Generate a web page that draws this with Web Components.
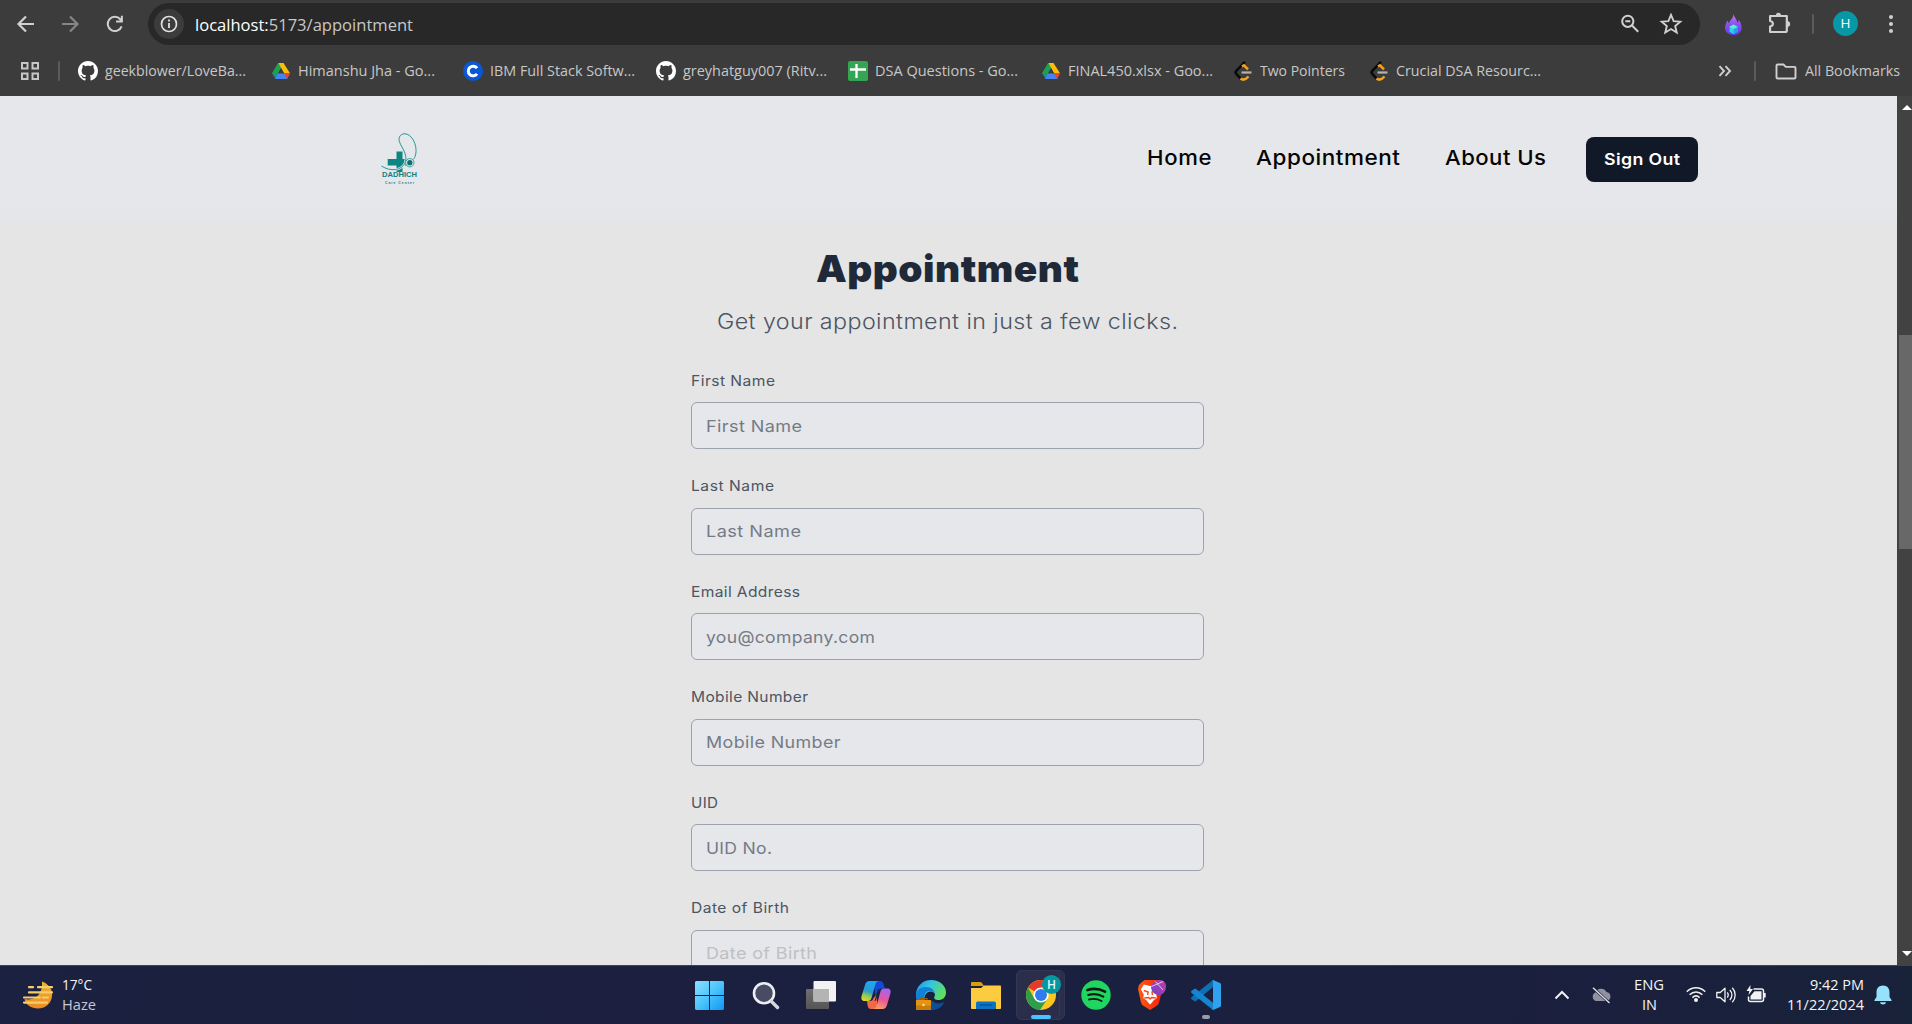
<!DOCTYPE html>
<html lang="en">
<head>
<meta charset="utf-8">
<title>Appointment</title>
<style>
html,body{margin:0;height:100%;overflow:hidden;background:#e5e5e5}
body{font-family:"Open Sans","Noto Sans",sans-serif}
</style>
</head>
<body>
<desktop-screen></desktop-screen>
<script>
const ICONS = {
back:['0 0 24 24','<path d="M20 12H5M12 4.5 4.5 12l7.5 7.5" fill="none" stroke="#d0d0d0" stroke-width="2.2"/>'],
fwd:['0 0 24 24','<path d="M4 12h15M12 4.5l7.5 7.5-7.5 7.5" fill="none" stroke="#858585" stroke-width="2.2"/>'],
reload:['0 0 24 24','<path d="M19.2 14.5A7.8 7.8 0 1 1 17.8 6.8L19 8.2M19.5 3v6.3h-6.3" fill="none" stroke="#d0d0d0" stroke-width="2.2"/>'],
info:['0 0 30 30','<circle cx="15" cy="15" r="15" fill="#3c3c3c"/><circle cx="15" cy="15" r="7.5" fill="none" stroke="#e0e0e0" stroke-width="1.7"/><path d="M15 14v5M15 10.6v2" stroke="#e0e0e0" stroke-width="1.8"/>'],
zoomout:['0 0 20 20','<circle cx="7.8" cy="7.3" r="5.6" fill="none" stroke="#d0d0d0" stroke-width="2"/><path d="M12 11.5l6.2 6.2M5.3 7.3h5" stroke="#d0d0d0" stroke-width="2" fill="none"/>'],
star:['0 0 20 20','<path d="M10 1.8l2.4 5.6 6 .5-4.6 3.9 1.4 5.9-5.2-3.1-5.2 3.1 1.4-5.9L1.6 7.9l6-.5z" fill="none" stroke="#d0d0d0" stroke-width="1.7"/>'],
flame:['0 0 17 21','<defs><linearGradient id="f" x1="0" y1="0" x2="0" y2="1"><stop offset="0" stop-color="#c77af0"/><stop offset=".5" stop-color="#8a4ff0"/><stop offset="1" stop-color="#5a3df0"/></linearGradient></defs><path d="M8.500 0c.5 3 3.500 5.500 4 9l1.500-3c2 3 3 6 2.500 9-.8 4-4 6-8 6-5 0-8.500-3-8.500-7 0-3.500 1.500-5.500 2.500-7.500l1.500 3C4.500 6 8.500 5 8.500 0z" fill="url(#f)"/><path d="M8.500 10.500l4 2.200v5l-4 2.600-4-2.600v-5z" fill="#2fd0e8"/><path d="M8.500 15l4-2.300v5l-4 2.600z" fill="#2a9df0"/><path d="M4.500 12.700l4-2.200 4 2.200-4 2.300z" fill="#5af0c8"/>'],
puzzle:['0 0 22 22','<path d="M2 4h16v14.500c0 .8-.5 1.500-1.500 1.500H2v-5.500c3.500-.5 3.500-5 0-5.500z" fill="none" stroke="#d0d0d0" stroke-width="2.100" stroke-linejoin="round"/><path d="M7.500 4a2.500 3.200 0 0 1 5 0zM18 9a3 2.800 0 0 1 0 6z" fill="#d0d0d0"/>'],
dots:['0 0 6 20','<g fill="#d0d0d0"><circle cx="3" cy="3" r="2"/><circle cx="3" cy="10" r="2"/><circle cx="3" cy="17" r="2"/></g>'],
apps:['0 0 20 20','<g fill="none" stroke="#c7c7c7" stroke-width="2"><path d="M2 2h5.500v5.500H2zM12.500 2H18v5.500h-5.500zM2 12.500h5.500V18H2zM12.500 12.500H18V18h-5.500z"/></g>'],
github:['0 0 16 16','<path fill="#fff" d="M8 0C3.580 0 0 3.580 0 8c0 3.540 2.290 6.530 5.470 7.590.4.070.55-.17.55-.38 0-.19-.01-.82-.01-1.490-2.010.37-2.530-.49-2.690-.94-.09-.23-.48-.94-.82-1.130-.28-.15-.68-.52-.01-.53.63-.01 1.080.58 1.230.82.72 1.210 1.870.87 2.330.66.070-.52.28-.87.51-1.070-1.780-.2-3.640-.89-3.640-3.950 0-.87.31-1.590.82-2.150-.08-.2-.36-1.020.08-2.120 0 0 .67-.21 2.200.82.64-.18 1.320-.27 2-.27s1.360.09 2 .27c1.530-1.040 2.200-.82 2.200-.82.44 1.100.16 1.920.08 2.120.51.56.82 1.270.82 2.150 0 3.070-1.870 3.750-3.650 3.950.29.25.54.73.54 1.480 0 1.070-.01 1.930-.01 2.200 0 .21.15.46.55.38A8.010 8.010 0 0 0 16 8c0-4.420-3.580-8-8-8z"/>'],
drive:['0 0 18 16','<path fill="#1ea052" d="M6 0h6L4 14.500 3.500 15.500 0 10.200z"/><path fill="#fcbd05" d="M6.500 0h5L18 10.300h-6z"/><path fill="#4284f3" d="M5.500 10.300H18l-3 5.700H3z"/><path fill="#1a6ee0" d="M5.900 10.300L3 16l-3-5.700z" opacity=".25"/><path fill="#ea4435" d="M12 10.300h6l-3 5.700z"/><path fill="#3c3c3c" d="M9 5.200l3 5.100H6z"/>'],
cour:['0 0 20 20','<circle cx="10" cy="10" r="10" fill="#0a57d6"/><path d="M14 7.200A4.800 4.800 0 1 0 14 12.800" fill="none" stroke="#fff" stroke-width="3"/>'],
sheet:['0 0 20 20','<rect width="20" height="20" rx="2" fill="#34a653"/><path d="M8.500 3v14M2 8.500h16" stroke="#fff" stroke-width="2.300"/>'],
leet:['0 0 18 20','<path d="M11 .8 2.300 9.800c-1 1-1 2 0 3l4.500 5" fill="none" stroke="#0a0a0a" stroke-width="2.500"/><path d="M8 5.500l2-1.200 4 4M6.500 17.500c2.500 2 5 1.500 8-2" fill="none" stroke="#f5a11d" stroke-width="2.500"/><path d="M7.500 11.500h10" stroke="#b3b3b3" stroke-width="2.200"/>'],
more:['0 0 14 12','<path d="M1.500 1.200 6 6l-4.500 4.800M7.500 1.200 12 6l-4.500 4.800" fill="none" stroke="#d0d0d0" stroke-width="1.900"/>'],
folder:['0 0 22 17','<path d="M1.500 2.500c0-.6.400-1 1-1h6l2.300 2.400h8.700c.6 0 1 .4 1 1v9.600c0 .6-.4 1-1 1h-17c-.6 0-1-.4-1-1z" fill="none" stroke="#d0d0d0" stroke-width="1.900"/>'],
logo:['0 0 36 40','<path d="M15.500 18.500h6V26h6v6.500h-6V39h-6v-6.500H6.700V26h8.800z" fill="#0c8583"/><path d="M.5 33c9 6 20 4.500 23.500-3 4-9-6-18-6-23.500C18 2.500 21 .6 24 .8c6 .4 10.500 8 11 15.500.3 6-1.500 9.500-4 11" fill="none" stroke="#dfe9ec" stroke-width="2.400"/><path d="M.5 33c9 6 20 4.500 23.500-3 4-9-6-18-6-23.500C18 2.500 21 .6 24 .8c6 .4 10.500 8 11 15.500.3 6-1.500 9.500-4 11" fill="none" stroke="#2f9491" stroke-width="1"/><circle cx="28.800" cy="29.700" r="4.200" fill="#d5e4e6" stroke="#2f9491" stroke-width=".8"/><circle cx="28.800" cy="29.700" r="2.600" fill="#0c6f70"/>'],
win:['0 0 29 29','<defs><linearGradient id="w" x1="0" y1="0" x2="1" y2="1"><stop offset="0" stop-color="#8ce0ff"/><stop offset=".5" stop-color="#4cc4fb"/><stop offset="1" stop-color="#0d97f5"/></linearGradient></defs><path fill="url(#w)" d="M1 0h13v14H0V1zM15 0h13l1 1v13H15zM0 15h14v14H1l-1-1zM15 15h14v13l-1 1H15z"/>'],
search:['0 0 28 29','<circle cx="12" cy="12.200" r="10" fill="#474b63" stroke="#eceef2" stroke-width="2.600"/><path d="M19.500 20.500l6 6" stroke="#d5d8de" stroke-width="3.400" stroke-linecap="round"/>'],
task:['0 0 30 28','<defs><linearGradient id="t" x1="0" y1="0" x2="0" y2="1"><stop offset="0" stop-color="#6f6f6f"/><stop offset="1" stop-color="#555"/></linearGradient></defs><rect y="8" width="23" height="20" rx="1" fill="url(#t)"/><rect x="7.500" width="22.500" height="20.500" rx="1" fill="#f2f2f2"/><path d="M7.500 8H23v12.500H7.500z" fill="#b4b4b4"/>'],
copilot:['0 0 30 28','<defs><linearGradient id="c1" x1=".5" y1="0" x2=".2" y2="1"><stop offset="0" stop-color="#19a8f5"/><stop offset=".5" stop-color="#2b9bd0"/><stop offset=".75" stop-color="#8fcf50"/><stop offset="1" stop-color="#f5d01f"/></linearGradient><linearGradient id="c2" x1=".6" y1="0" x2=".3" y2="1"><stop offset="0" stop-color="#a565ef"/><stop offset=".5" stop-color="#e8559c"/><stop offset="1" stop-color="#fba060"/></linearGradient></defs><path d="M13 0h6c2 0 3 1 3.500 3l1.500 4.500h-3c-2 0-3 1-3.500 3L14 14z" fill="#1548d6"/><path d="M16 28h-6c-2 0-2.800-1-3.300-3L6 20h3c2 0 3-1 3.500-3L16 13z" fill="#f06a48"/><path d="M8.500 0H18c-2 0-3 1.500-3.600 3.500L10.500 17c-.6 2-1.500 3-3.500 3H3.500C.5 20 0 17.500.6 15L4 4C4.800 1.500 6 0 8.500 0z" fill="url(#c1)"/><path d="M21.500 28H12c2 0 3-1.500 3.600-3.500l3.900-14c.6-2 1.500-3 3.500-3h3.500c3 0 3.500 2.500 2.900 5L26 24c-.8 2.500-2 4-4.500 4z" fill="url(#c2)"/><path d="M13.500 20 17 8.500l1.200-.5L15 19.500z" fill="#1c2140"/>'],
edge:['0 0 30 30','<defs><linearGradient id="e1" x1="0" y1="0" x2="1" y2=".5"><stop offset="0" stop-color="#1a8fd8"/><stop offset=".45" stop-color="#35c3e3"/><stop offset="1" stop-color="#5fe05a"/></linearGradient></defs><path d="M7 28C16 33 26 29 28 22c-4 2-9 2-11-1L6 19z" fill="#104f96"/><path d="M0 15C0 6 7 0 15 0c9 0 15 6 15 12.500 0 5-3.500 7.500-7.500 7.500-3.500 0-5-1.500-4-3.500 1.500-2.500-.5-5-4-5-5 0-7 6-6 10H1z" fill="url(#e1)"/><path d="M0 15c1-6 5-8 10-8 5 0 8 3 9 6-3-3-8-3-10 1-1 2-1 5 0 8H1z" fill="#1180d8"/><path d="M0 20h15v10H0z" fill="#c97c08"/><path d="M0 20h15v5.500H0z" fill="#e29412"/><path d="M4 20v-1.500h7V20" fill="none" stroke="#9c5a08" stroke-width="1.200"/><circle cx="7.500" cy="25" r="1.200" fill="#ffe680"/>'],
explorer:['0 0 30 27','<path d="M0 1.200C0 .4.500 0 1.200 0H9c1 0 1.500.5 2 1l2 3H0z" fill="#dc9d0c"/><path d="M0 6h10l3-2.500h16c.6 0 1 .4 1 1V26c0 .6-.4 1-1 1H1c-.6 0-1-.4-1-1z" fill="#fccb3f"/><path d="M5 27v-5.500C5 20 6 19.500 7 19.500h16c1 0 2 .5 2 2V27z" fill="#0b72c4"/><path d="M8.500 23h13" stroke="#064e90" stroke-width="1.300"/>'],
chrome:['0 0 30 30','<circle cx="15" cy="15" r="15" fill="#fcc620"/><path d="M15 15 2 7.500A15 15 0 0 1 28 7.500H15z" fill="#e33b2e"/><path d="M15 15l6.500 3.700L14 30A15 15 0 0 1 2 7.500l6.500 11.200z" fill="#2f9e49"/><circle cx="15" cy="15" r="7.600" fill="#fff"/><circle cx="15" cy="15" r="6" fill="#2e7cf0"/>'],
spotify:['0 0 30 30','<circle cx="15" cy="15" r="14.700" fill="#1fd760"/><g fill="none" stroke="#0b1a12" stroke-linecap="round"><path d="M6.500 10c6-1.800 12-1.200 17.500 1.600" stroke-width="2.700"/><path d="M7.300 15c5-1.400 10.300-.9 15 1.600" stroke-width="2.200"/><path d="M8 19.500c4.500-1 8.800-.6 12.600 1.500" stroke-width="1.800"/></g>'],
brave:['0 0 29 30','<defs><linearGradient id="b" x1="0" y1="0" x2="1" y2="0"><stop offset="0" stop-color="#ff5a12"/><stop offset="1" stop-color="#f5200d"/></linearGradient><linearGradient id="b2" x1="1" y1="0" x2="0" y2="1"><stop offset="0" stop-color="#c43da0"/><stop offset="1" stop-color="#6a45d0"/></linearGradient></defs><path d="M7 0h12l5 3.500 1.500 5L22 22c-.5 2-1.500 3-3 4l-6.500 4L6 26c-1.500-1-2.500-2-3-4L0 9l1-4L4 2z" fill="url(#b)"/><path d="M6 4.500l6.500 1.500L18 4.500l4 5-3 5 .5 3.500-3.500 2.500-1.500 2-2 2-2-2-1.500-2L5.500 18l.5-3.500L3 9.500z" fill="#fff"/><path d="M6 10.500l4.500 1.500-.5 3M19 10.500 14.500 12l.5 3M6.500 18l4.500-.5 1.500 1.500 1.500-1.500 4.500.5" fill="none" stroke="#fb4612" stroke-width="1.500"/><path d="M13.500 6.500C15 2 18 0 22 0c4.500 0 7 2.500 7 6.500 0 5-3.500 8.500-7.500 8.500-4.500 0-8-4-8-8.500z" fill="url(#b2)"/><path d="M14 6.500l12-5M18 1.500l8 8.500" stroke="#ecd5f3" stroke-width=".9"/>'],
vscode:['0 0 30 30','<path d="M22 0l2 5.500L4.500 21.500 2.500 20.600.4 19c-.5-.5-.5-1.200 0-1.800z" fill="#0f6fb3"/><path d="M22 30l2-5.500L4.500 8.500l-2 .9L.4 11c-.5.500-.5 1.200 0 1.800z" fill="#1486cf"/><path d="M22 0l7 3c.6.300 1 .8 1 1.500v21c0 .7-.4 1.200-1 1.500l-7 3c-1 .2-.5 0-1-.5.600.5 1 0 1-1V1.500c0-1-.4-1.500-1-1z" fill="#2ea2ef"/>'],
weather:['0 0 30 28','<defs><linearGradient id="m" x1="0" y1="0" x2="0" y2="1"><stop offset="0" stop-color="#e8b437"/><stop offset="1" stop-color="#ef8a22"/></linearGradient></defs><path d="M19 .5C26 3 30 9 29 15.500 28 23 22 27.500 15 27.500 8 27.500 3 24 1.500 18 12 20 20 14 19 .5z" fill="url(#m)"/><g stroke="#f5cd69" stroke-width="2.200" stroke-linecap="round"><path d="M6 6.200h4M15 6.200h14M6 11.400h23M1 16.500h16M20 16.500h5M1 21.600h23"/></g>'],
up:['0 0 16 10','<path d="M1.500 8.500 8 2l6.500 6.500" fill="none" stroke="#f2f2f2" stroke-width="2"/>'],
cloud:['0 0 20 17','<path d="M5 14a4.500 4.500 0 0 1-.5-8.500A6 6 0 0 1 15.500 5a4.600 4.600 0 0 1 .5 9z" fill="#8f91a0"/><path d="M2 .8 18.500 16" stroke="#1b2040" stroke-width="2.600"/><path d="M2 .8 18.500 16" stroke="#dfe0e6" stroke-width="1.400"/>'],
wifi:['0 0 20 16','<g fill="none" stroke="#f2f2f2" stroke-width="1.500"><path d="M.8 5.800c5.300-5.300 13.100-5.300 18.400 0M3.600 8.800c3.700-3.700 9.100-3.700 12.800 0M6.400 11.600c2.200-2.100 5-2.100 7.200 0"/></g><circle cx="10" cy="14" r="2" fill="#f2f2f2"/>'],
speaker:['0 0 20 16','<g fill="none" stroke="#f2f2f2" stroke-width="1.300"><path d="M.8 5.500h3.400L9 1.200v13.600L4.200 10.500H.8z" stroke-linejoin="round"/><path d="M11.200 5.500a3.500 3.500 0 0 1 0 5M13.800 3a7 7 0 0 1 0 10M16.300.8a10.500 10.500 0 0 1 0 14.400"/></g>'],
battery:['0 0 20 18','<path d="M7.500 4h8c1.200 0 2 .8 2 2v8.500c0 1.200-.8 2-2 2h-11c-1.200 0-2-.8-2-2v-3" fill="none" stroke="#f2f2f2" stroke-width="1.500"/><path d="M8.500 6.200h7v8.200h-11v-3.500z" fill="#f2f2f2"/><path d="M18.700 8v4.500" stroke="#f2f2f2" stroke-width="2"/><path d="M4.500 0 .5 6h2.800L2.500 10l4.500-6H4.300z" fill="#f2f2f2"/>'],
bell:['0 0 18 20','<path d="M9 .5c4 0 6.500 2.800 6.500 6.500v5l2 3c.3.600 0 1-.6 1H1.100c-.6 0-.9-.4-.6-1l2-3V7C2.500 3.300 5 .5 9 .5z" fill="#96e2fb"/><path d="M6 17.200h6c-.5 3-5.500 3-6 0z" fill="#96e2fb"/>']
};

const define = (name, css, html, ready) => customElements.define(name, class extends HTMLElement {
  connectedCallback() {
    if (this.shadowRoot) return;
    const t = document.createElement('template');
    t.innerHTML = `<style>${css}</style>${typeof html === 'function' ? html(this) : html}`;
    this.attachShadow({mode:'open'}).appendChild(t.content.cloneNode(true));
    if (ready) ready(this);
  }
});

/* name: icon key; w,h: drawn size */
define('ui-icon', ':host{display:block;flex:none}svg{display:block;width:100%;height:100%;overflow:visible}',
  e => `<svg viewBox="${ICONS[e.getAttribute('name')][0]}" preserveAspectRatio="none">${ICONS[e.getAttribute('name')][1]}</svg>`,
  e => { e.style.width = e.getAttribute('w') + 'px'; e.style.height = e.getAttribute('h') + 'px'; });

/* text set to a given measure: "track" shares the slack between glyph width and tracking */
define('fit-text', ':host{display:block;flex:none;white-space:nowrap}span{display:inline-block;transform-origin:0 50%}',
  '<span><slot></slot></span>',
  e => {
    const s = e.shadowRoot.querySelector('span'), w = +e.getAttribute('w');
    const n = s.getBoundingClientRect().width;
    e.style.width = w + 'px';
    if (e.hasAttribute('track')) {
      const k = 1 + Math.max(-.02, Math.min(.1, (w / n - 1) * .7));
      s.style.letterSpacing = ((w / k - n) / (e.textContent.length - 1)) + 'px';
      s.style.transform = `scaleX(${k})`;
    } else s.style.transform = `scaleX(${w / n})`;
  });

define('v-rule', ':host{display:block;flex:none;width:2px;height:20px;background:#5b5b5b;border-radius:1px}', '');

define('bookmark-item', ':host{display:flex;flex:none;align-items:center}.i{width:20px;display:flex;justify-content:center;margin-right:var(--gap,7px)}fit-text{font-size:14.8px;line-height:20px;color:#c7c7c7;margin:-2px 1px 0 0}',
  e => `<div class="i"><ui-icon name="${e.getAttribute('icon')}" w="${e.getAttribute('iw')||20}" h="${e.getAttribute('ih')||20}"></ui-icon></div><fit-text w="${e.getAttribute('w')}">${e.textContent}</fit-text>`);

define('browser-toolbar', `:host{display:flex;align-items:flex-start;height:48px;box-sizing:border-box;padding-top:3px}
.row{display:flex;align-items:center;height:42px}
.nav{padding-left:14px;width:134px;gap:21px}
.omni{width:1552px;background:#282828;border-radius:21px;box-sizing:border-box;padding:0 18px 0 6px}
.url{font-size:17px;margin-left:10.500px;color:#c7c7c7}.url b{font-weight:400;color:#fff}
.sp{flex:1}.ext{padding-left:24.500px}
.av{width:25px;height:25px;border-radius:50%;background:#0797a7;color:#fff;font:13.5px/25px "Open Sans",sans-serif;text-align:center;margin:-1px 30px 0 19px}`,
`<div class="row nav"><ui-icon name="back" w="24" h="24"></ui-icon><ui-icon name="fwd" w="24" h="24" style="margin-left:-1px"></ui-icon><ui-icon name="reload" w="22" h="22" style="margin-left:1px"></ui-icon></div>
<div class="row omni"><ui-icon name="info" w="30" h="30"></ui-icon><fit-text class="url" w="218"><b>localhost:</b>5173/appointment</fit-text><div class="sp"></div><ui-icon name="zoomout" w="20" h="20" style="margin-right:20px"></ui-icon><ui-icon name="star" w="22" h="22"></ui-icon></div>
<div class="row ext"><ui-icon name="flame" w="17" h="21"></ui-icon><ui-icon name="puzzle" w="23" h="22" style="margin:-2px 21px 0 26.500px"></ui-icon><v-rule></v-rule><div class="av">H</div><ui-icon name="dots" w="6" h="20"></ui-icon></div>`);

define('bookmarks-bar', `:host{display:flex;align-items:center;height:46px;box-sizing:border-box;padding:0 11px 0 20px}
.sp{flex:1}bookmark-item{margin-left:28px}`,
`<ui-icon name="apps" w="20" h="20"></ui-icon><v-rule style="margin-left:18px"></v-rule>
<bookmark-item icon="github" w="141" style="margin-left:18px">geekblower/LoveBa...</bookmark-item>
<bookmark-item icon="drive" iw="18" ih="16" w="137" style="margin-left:24px">Himanshu Jha - Go...</bookmark-item>
<bookmark-item icon="cour" w="145" style="margin-left:27px">IBM Full Stack Softw...</bookmark-item>
<bookmark-item icon="github" w="144" style="margin-left:20px">greyhatguy007 (Ritv...</bookmark-item>
<bookmark-item icon="sheet" w="143" style="margin-left:20px">DSA Questions - Go...</bookmark-item>
<bookmark-item icon="drive" iw="18" ih="16" w="145" style="margin-left:22px">FINAL450.xlsx - Goo...</bookmark-item>
<bookmark-item icon="leet" iw="18" w="85" style="margin-left:19px">Two Pointers</bookmark-item>
<bookmark-item icon="leet" iw="18" w="145" style="margin-left:23px">Crucial DSA Resourc...</bookmark-item>
<div class="sp"></div><ui-icon name="more" w="14" h="12"></ui-icon><v-rule style="margin:0 18px 0 22px"></v-rule>
<bookmark-item icon="folder" iw="22" ih="17" w="95" style="margin-left:2px;--gap:9px">All Bookmarks</bookmark-item>`);

define('clinic-logo', ':host{display:flex;flex-direction:column;align-items:center;width:36px;height:53px;position:relative;color:#17807f}.n{position:absolute;left:1px;top:38px;font:700 6.8px/8px "Liberation Sans",sans-serif}.c{position:absolute;left:4px;top:48.500px;font:700 3.200px/4px "Liberation Sans",sans-serif}',
'<ui-icon name="logo" w="36" h="40"></ui-icon><fit-text class="n" w="35">DADHICH</fit-text><fit-text class="c" w="29" track>Care Center</fit-text>');

define('site-nav', `:host{display:flex;flex:none;height:126px;box-sizing:border-box;padding:0 199px 0 381px;align-items:center;background:linear-gradient(#e5e7eb 85%,#e5e6ea);font-family:Inter,sans-serif}
.sp{flex:1}.l{font-size:20.5px;font-weight:500;color:#050505;line-height:28px;margin-top:-2px}
.b{width:112px;height:45px;border-radius:8px;background:#111827;color:#fff;display:flex;align-items:center;justify-content:center;font-size:16.300px;font-weight:600;line-height:24px;margin-left:40px}`,
`<clinic-logo></clinic-logo><div class="sp"></div>
<fit-text class="l" track w="64.500">Home</fit-text><fit-text class="l" track w="144" style="margin-left:45px">Appointment</fit-text><fit-text class="l" track w="101" style="margin-left:45px">About Us</fit-text><div class="b"><fit-text track w="76">Sign Out</fit-text></div>`);

define('form-field', `:host{display:block;height:105.500px}
.l{font-size:14.200px;line-height:20px;color:#4b5563;padding-left:.3px}
.b{box-sizing:border-box;width:513px;height:47px;margin-top:11.500px;border:1px solid #9ca3af;border-radius:6px;background:#e5e7eb;padding-left:13.700px;display:flex;align-items:center;font-size:16.500px;line-height:24px;color:var(--ph,#757b86)}`,
e => `<fit-text class="l" track w="${e.getAttribute('lw')}">${e.getAttribute('label')}</fit-text><div class="b"><fit-text track w="${e.getAttribute('pw')}">${e.textContent}</fit-text></div>`);

define('appointment-page', `:host{display:flex;flex-direction:column;width:1897px;height:869px;overflow:hidden;background:#e5e5e5;font-family:Inter,sans-serif}
.f{flex:none;width:513px;margin:0 auto 0 691px;display:flex;flex-direction:column;padding-top:23px}
h1{margin:0;align-self:center;font-size:37px;font-weight:900;line-height:48px;color:#1f2937}
p{margin:0 0 0 26px;font-size:21.300px;line-height:28px;color:#4b5563;padding-top:14px;font-weight:350}
.fields{padding-top:35.500px;font-weight:370}`,
`<site-nav></site-nav><div class="f"><h1><fit-text track w="263">Appointment</fit-text></h1><p><fit-text track w="461">Get your appointment in just a few clicks.</fit-text></p>
<div class="fields">
<form-field label="First Name" lw="84" pw="96">First Name</form-field>
<form-field label="Last Name" lw="83" pw="95">Last Name</form-field>
<form-field label="Email Address" lw="109" pw="169">you@company.com</form-field>
<form-field label="Mobile Number" lw="117" pw="134.500">Mobile Number</form-field>
<form-field label="UID" lw="27" pw="66">UID No.</form-field>
<form-field label="Date of Birth" lw="98" pw="111" style="--ph:#bfc0c2">Date of Birth</form-field>
</div></div>`);

define('page-scrollbar', `:host{display:flex;flex-direction:column;align-items:flex-end;width:15px;height:869px;background:#424242;box-sizing:border-box;padding:9px 0}
.t{width:13px;height:214px;background:#686868;margin-top:225px}.sp{flex:1}svg{display:block}`,
`<svg width="10" height="5"><path d="M0 5 5 0l5 5z" fill="#fff"/></svg><div class="t"></div><div class="sp"></div><svg width="10" height="5"><path d="M0 0h10L5 5z" fill="#fff"/></svg>`);

define('task-app', ':host{display:flex;flex:none;width:55px;height:50px;align-items:center;justify-content:center;position:relative}.tile{position:absolute;inset:0 0 0 0;width:49px;left:3px;background:#2b2e4b;border:1px solid #343754;border-radius:6px;box-sizing:border-box}.tile2{width:44px;left:3px;background:none}ui-icon{position:relative}.bar{position:absolute;bottom:1px;height:4px;border-radius:2px}.badge{position:absolute;left:29px;top:5px;width:19px;height:19px;border-radius:50%;background:#0797a0;color:#dff;font:600 12px/19px "Open Sans",sans-serif;text-align:center}',
e => `${e.hasAttribute('active')?'<div class="tile"></div><div class="tile tile2"></div>':''}<ui-icon name="${e.getAttribute('icon')}" w="${e.getAttribute('iw')||30}" h="${e.getAttribute('ih')||30}"></ui-icon>${e.hasAttribute('active')?'<div class="badge">H</div><div class="bar" style="width:20px;background:#4cc2ff"></div>':''}${e.hasAttribute('open')?'<div class="bar" style="width:8px;background:#9a9bab"></div>':''}`);

define('task-bar', `:host{display:flex;height:59px;box-sizing:border-box;border-top:1px solid #3d4350;background:linear-gradient(90deg,#1b2140,#1c1f3f 35%,#1a213f 60%,#1b1f3e 80%,#182239);color:#f5f5f5;font-size:15.300px;line-height:20px}
.w{display:flex;width:682px;padding-left:23px;box-sizing:border-box;padding-top:7.500px;gap:9px}.w ui-icon{margin-top:7px}
.apps{display:flex;padding-top:4px}
.tray{margin-left:auto;display:flex;align-items:center;padding-right:20px;height:57px;padding-top:1px;box-sizing:border-box}
.two{display:flex;flex-direction:column;align-items:center;margin-top:-3px}.r{align-items:flex-end}.h{color:#c4c6d0}`,
`<div class="w"><ui-icon name="weather" w="30" h="28"></ui-icon><div><fit-text w="30">17°C</fit-text><fit-text class="h" w="34">Haze</fit-text></div></div>
<div class="apps"><task-app icon="win" iw="29" ih="29"></task-app><task-app icon="search" iw="28" ih="29" style="width:57px"></task-app><task-app icon="task" ih="28" style="width:54px"></task-app><task-app icon="copilot" ih="28"></task-app><task-app icon="edge"></task-app><task-app icon="explorer" ih="27"></task-app><task-app icon="chrome" active></task-app><task-app icon="spotify"></task-app><task-app icon="brave" iw="28" style="width:57px;margin-right:-2px"></task-app><task-app icon="vscode" open></task-app></div>
<div class="tray"><ui-icon name="up" w="16" h="10" style="margin-right:21px"></ui-icon><ui-icon name="cloud" w="20" h="17" style="margin-right:23px"></ui-icon>
<div class="two"><fit-text w="30">ENG</fit-text><fit-text w="15">IN</fit-text></div>
<ui-icon name="wifi" w="20" h="16" style="margin-left:22px;margin-top:-2px"></ui-icon><ui-icon name="speaker" w="20" h="16" style="margin:-1px 0 0 10px"></ui-icon><ui-icon name="battery" w="20" h="18" style="margin:-3px 0 0 10px"></ui-icon>
<div class="two r" style="margin-left:21px"><fit-text w="54">9:42 PM</fit-text><fit-text w="77">11/22/2024</fit-text></div>
<ui-icon name="bell" w="18" h="20" style="margin-left:10px"></ui-icon></div>`);

define('desktop-screen', `:host{display:flex;flex-direction:column;width:1912px;height:1024px;overflow:hidden}
.c{background:#3c3c3c;height:96px}.m{display:flex;height:869px}`,
'<div class="c"><browser-toolbar></browser-toolbar><bookmarks-bar></bookmarks-bar></div><div class="m"><appointment-page></appointment-page><page-scrollbar></page-scrollbar></div><task-bar></task-bar>');
</script>
</body>
</html>
